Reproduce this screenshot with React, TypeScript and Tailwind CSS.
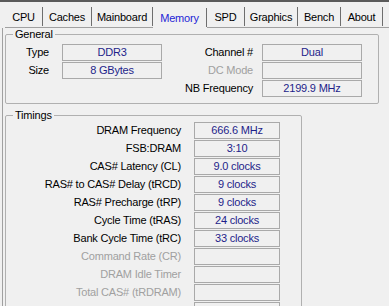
import React from 'react';

const TABS = [
  { name: 'CPU', w: 38 },
  { name: 'Caches', w: 49 },
  { name: 'Mainboard', w: 61 },
  { name: 'Memory', w: 54, active: true },
  { name: 'SPD', w: 38 },
  { name: 'Graphics', w: 53 },
  { name: 'Bench', w: 43 },
  { name: 'About', w: 42 },
];

const GENERAL = [
  { left: 'Type', leftValue: 'DDR3', right: 'Channel #', rightValue: 'Dual' },
  { left: 'Size', leftValue: '8 GBytes', right: 'DC Mode', rightValue: '', rightDisabled: true },
  { left: '', leftValue: null, right: 'NB Frequency', rightValue: '2199.9 MHz' },
];

const TIMINGS = [
  { label: 'DRAM Frequency', value: '666.6 MHz' },
  { label: 'FSB:DRAM', value: '3:10' },
  { label: 'CAS# Latency (CL)', value: '9.0 clocks' },
  { label: 'RAS# to CAS# Delay (tRCD)', value: '9 clocks' },
  { label: 'RAS# Precharge (tRP)', value: '9 clocks' },
  { label: 'Cycle Time (tRAS)', value: '24 clocks' },
  { label: 'Bank Cycle Time (tRC)', value: '33 clocks' },
  { label: 'Command Rate (CR)', value: '', disabled: true },
  { label: 'DRAM Idle Timer', value: '', disabled: true },
  { label: 'Total CAS# (tRDRAM)', value: '', disabled: true },
  { label: 'Row To Column (tRCD)', value: '', disabled: true },
];

const ValueBox = ({ value, width }: { value: string; width: string }) => (
  <div
    className={`${width} h-[17px] border border-[#a9a9a9] bg-[#f0f0f0] flex items-center justify-center text-[#1e1e8a] leading-none`}
  >
    {value}
  </div>
);

export default function App() {
  return (
    <div
      className="w-[389px] h-[306px] overflow-hidden bg-[#f0f0f0] border-t-2 border-[#5a5a5a] text-[11px] tracking-[-0.2px] text-black"
      style={{ fontFamily: '"Liberation Sans", Arial, sans-serif' }}
    >
      {/* tab strip */}
      <div className="flex h-[26px] pl-[5px]">
        {TABS.map((t) => (
          <div
            key={t.name}
            className={`flex items-end ${t.active ? '' : 'border-b border-[#a0a0a0]'}`}
            style={{ width: t.w }}
          >
            <div
              className={`flex-1 h-full flex items-center justify-center pt-[6px] ${
                t.active ? 'text-[#2424d6]' : ''
              }`}
            >
              {t.name}
            </div>
            <div className="w-px h-[19px] bg-[#6e6e6e] mb-[1px]" />
          </div>
        ))}
        <div className="flex-1 border-b border-[#a0a0a0]" />
      </div>

      {/* page */}
      <div className="ml-[2px] h-full border-l border-[#a0a0a0] pl-[2px]">
        <fieldset className="w-[374px] h-[76px] border border-[#b0b0b0] rounded-[2px]">
          <legend className="ml-[7px] px-[2px] leading-[13px]">General</legend>
          <div className="flex flex-col gap-[1px] pt-[3px]">
            {GENERAL.map((r, i) => (
              <div key={i} className="flex items-center h-[17px]">
                <div className="w-[43px] text-right">{r.left}</div>
                <div className="w-[13px]" />
                {r.leftValue !== null ? <ValueBox value={r.leftValue} width="w-[100px]" /> : <div className="w-[100px]" />}
                <div className={`w-[91px] text-right ${r.rightDisabled ? 'text-[#a0a0a0]' : ''}`}>{r.right}</div>
                <div className="w-[9px]" />
                <ValueBox value={r.rightValue} width="w-[100px]" />
              </div>
            ))}
          </div>
        </fieldset>

        <fieldset className="mt-[5px] w-[297px] h-[220px] border border-[#b0b0b0] rounded-[2px]">
          <legend className="ml-[7px] px-[2px] leading-[13px]">Timings</legend>
          <div className="flex flex-col gap-[1px]">
            {TIMINGS.map((r) => (
              <div key={r.label} className="flex items-center h-[17px]">
                <div className={`w-[175px] text-right whitespace-nowrap ${r.disabled ? 'text-[#a0a0a0]' : ''}`}>
                  {r.label}
                </div>
                <div className="w-[13px]" />
                <ValueBox value={r.value} width="w-[86px]" />
              </div>
            ))}
          </div>
        </fieldset>
      </div>
    </div>
  );
}
